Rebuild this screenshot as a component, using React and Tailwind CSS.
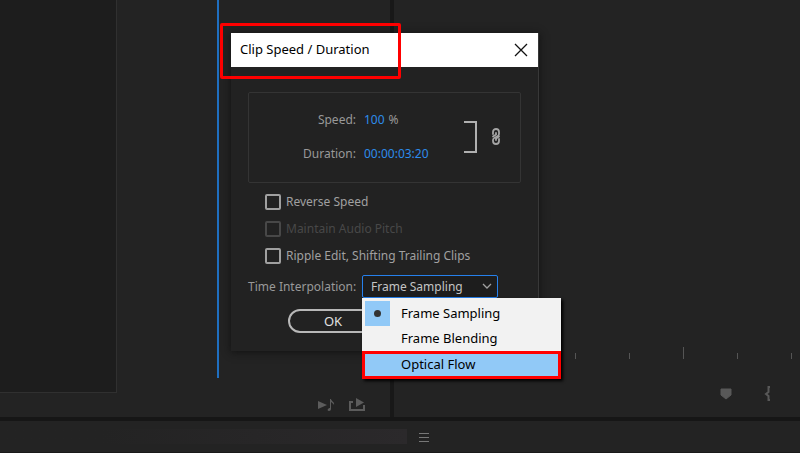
import React, { useState } from "react";

const modes = ["Frame Sampling", "Frame Blending", "Optical Flow"];

const ticks = [
  { id: 1, tall: false },
  { id: 2, tall: false },
  { id: 3, tall: true },
  { id: 4, tall: false },
  { id: 5, tall: false },
];

const CheckRow = ({ label, disabled }) => (
  <label
    className={`flex items-center gap-[5px] h-[27px] ${
      disabled ? "text-[#484848]" : "text-[#a0a0a0]"
    }`}
  >
    <input
      type="checkbox"
      disabled={disabled}
      className="appearance-none w-4 h-4 rounded-xs border-2 border-[#a0a0a0] disabled:border-[#484848] checked:bg-[#2680eb]"
    />
    {label}
  </label>
);

const SourcePanel = () => (
  <section className="w-[390px] flex flex-col">
    <div className="flex-1 flex">
      <div className="w-[117px] bg-[#1d1d1d] border-r border-b border-[#303030]" />
      <div className="w-[102px] mb-[15px] border-r-2 border-[#1f6fc0]" />
    </div>
    <div className="h-6 pr-6 flex justify-end items-center gap-3.5 text-[#5c5c5c]">
      <button aria-label="Play audio">
        <svg width="17" height="14" viewBox="0 0 17 14" fill="currentColor">
          <path d="M0 3v8l9-4z" />
          <path d="M12 1h1c0 2 4 3 3 6-1-2-2-2-3-3v7c0 1-1 2-2 2s-2-1-1-2 1-1 2-1z" />
        </svg>
      </button>
      <button aria-label="Export">
        <svg width="17" height="14" viewBox="0 0 17 14" fill="none">
          <path d="M4 4H1v8h14V7" stroke="currentColor" strokeWidth="2" />
          <path d="M7 0l8 4.500L7 9z" fill="currentColor" />
        </svg>
      </button>
    </div>
  </section>
);

const ProgramPanel = () => (
  <section className="flex-1 flex flex-col justify-end">
    <div className="flex items-end justify-end gap-[53px] pr-2">
      {ticks.map((tick) => (
        <span
          key={tick.id}
          className={`w-px bg-[#555] ${tick.tall ? "h-3" : "h-1.5"}`}
        />
      ))}
    </div>
    <div className="h-[58px] pt-[26px] pr-7 flex items-start justify-end gap-8 text-[#585858]">
      <button aria-label="Add marker">
        <svg width="12" height="16" viewBox="0 0 12 16" fill="currentColor">
          <path d="M1 4h10v6l-5 4-5-4z" stroke="currentColor" strokeLinejoin="round" />
        </svg>
      </button>
      <button aria-label="Mark in">
        <svg width="8" height="16" viewBox="0 0 8 16" fill="none" stroke="currentColor" strokeWidth="2">
          <path d="M6 2H4.500v5L2 9l2.500 2v4H6" />
        </svg>
      </button>
    </div>
  </section>
);

const ModeMenu = ({ value, onChange }) => (
  <div
    role="menu"
    className="absolute top-full left-0 w-[199px] pt-[3px] bg-[#f2f2f2] text-[13px] text-black shadow-[2px_2px_3px_#000000]"
  >
    {modes.map((mode) => (
      <button
        key={mode}
        role="menuitemradio"
        aria-checked={mode === value}
        onClick={() => onChange(mode)}
        className={`w-full flex items-center gap-[11px] text-left ${
          mode === "Optical Flow"
            ? "h-7 border-[3px] border-[#ff0000] bg-[#91c9f7]"
            : "h-[25px] px-[3px]"
        }`}
      >
        <span
          className={`w-[25px] h-full flex items-center justify-center ${
            mode === value ? "bg-[#91c9f7]" : ""
          }`}
        >
          {mode === value && <span className="w-[7px] h-[7px] rounded-full bg-[#333]" />}
        </span>
        {mode}
      </button>
    ))}
  </div>
);

const SpeedDialog = () => {
  const [mode, setMode] = useState("Frame Sampling");

  return (
    <div
      role="dialog"
      aria-labelledby="dialog-title"
      className="absolute left-[231px] top-[33px] w-[308px] bg-[#222] border-r border-[#383838] shadow-[0_1px_8px_#111111]"
    >
      <header className="h-[34px] pl-[9px] pr-2.5 flex items-center justify-between bg-white text-[13px] text-black">
        <h1 id="dialog-title">Clip Speed / Duration</h1>
        <button aria-label="Close">
          <svg width="14" height="14" viewBox="0 0 14 14" stroke="#111" strokeWidth="1.3">
            <path d="M1 1l12 12M13 1L1 13" />
          </svg>
        </button>
      </header>
      {/* highlight around the title */}
      <div className="absolute -left-[11px] -top-[10px] w-[181px] h-[56px] border-[3px] border-[#ff0000] rounded-xs" />

      <div className="pt-[25px] pb-[18px] px-[17px] text-xs">
        <div className="h-[91px] pb-0.5 border border-[#343434] rounded-xs flex items-center justify-between pr-[19px]">
          <div className="w-[190px] grid grid-cols-[107px_1fr] gap-x-2 gap-y-4 leading-[18px] text-[#999]">
            <span className="text-right">Speed:</span>
            <span className="flex gap-1">
              <button className="text-[#2d8ceb]">100</button>%
            </span>
            <span className="text-right">Duration:</span>
            <button className="text-left text-[#2d8ceb]">00:00:03:20</button>
          </div>
          <div className="flex items-center gap-3.5">
            <div className="w-[13px] h-8 border-2 border-l-0 border-[#b0b0b0]" />
            <button aria-label="Link speed and duration">
              <svg width="10" height="17" viewBox="0 0 10 17" fill="none" stroke="#a5a5a5" strokeWidth="1.8" strokeLinecap="round">
                <path d="M2 6V4c0-4 6-4 6 0v2c0 2-1 2-3 3s-3 1-3 3v1c0 4 6 4 6 0v-2" />
                <path d="M5 5v1.500L2 8.500M5 12v-1.500L8 8.500" />
              </svg>
            </button>
          </div>
        </div>

        <div className="pt-[5px] pl-[17px]">
          <CheckRow label="Reverse Speed" />
          <CheckRow label="Maintain Audio Pitch" disabled />
          <CheckRow label="Ripple Edit, Shifting Trailing Clips" />
        </div>

        <div className="mt-[6px] flex items-center justify-between pr-[23px] text-[#999]">
          <label htmlFor="interpolation" className="whitespace-nowrap">
            Time Interpolation:
          </label>
          <div className="relative w-[136px]">
            <select
              id="interpolation"
              value={mode}
              onChange={(e) => setMode(e.target.value)}
              className="block appearance-none w-full h-[23px] pl-2 border border-[#2680eb] rounded-xs bg-[#1d1d1d] text-[#c4c4c4]"
            >
              {modes.map((item) => (
                <option key={item}>{item}</option>
              ))}
            </select>
            <svg
              className="absolute right-1.5 top-2 pointer-events-none"
              width="10"
              height="7"
              viewBox="0 0 10 7"
              fill="none"
              stroke="#a0a0a0"
              strokeWidth="1.300"
            >
              <path d="M1 1l4 4 4-4" />
            </svg>
            <ModeMenu value={mode} onChange={setMode} />
          </div>
        </div>

        <button className="block mt-[11px] ml-10 w-[90px] h-6 border-2 border-[#b8b8b8] rounded-full text-[#e0e0e0] text-[13px] leading-5">
          OK
        </button>
      </div>
    </div>
  );
};

const App = () => {
  return (
    <div className="relative h-screen overflow-hidden flex flex-col bg-[#161616] font-['Noto_Sans','Open_Sans',sans-serif]">
      <main className="flex-1 flex bg-[#232323]">
        <SourcePanel />
        <div className="w-1 bg-[#181818]" />
        <ProgramPanel />
      </main>
      <footer className="mt-1 h-8 border-b border-[#191919] bg-[#232323] flex items-center gap-3">
        <div className="w-[407px] h-[15px] bg-linear-to-r from-[#232323] from-25% to-[#2b292b]" />
        <button aria-label="Panel menu">
          <svg width="10" height="10" viewBox="0 0 10 10" stroke="#777">
            <path d="M0 1.500h10M0 5.500h10M0 9.500h10" />
          </svg>
        </button>
      </footer>
      <SpeedDialog />
    </div>
  );
};

export default App;
